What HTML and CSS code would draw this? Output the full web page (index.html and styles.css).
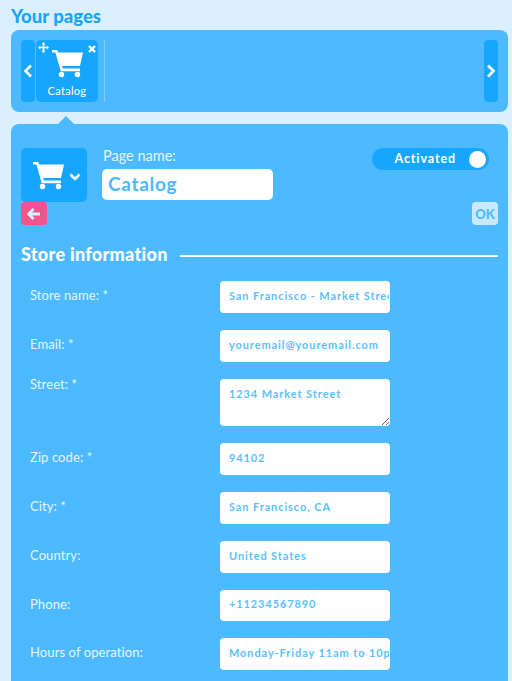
FILE: index.html
```html
<!DOCTYPE html>
<html lang="en">
<head>
<meta charset="UTF-8">
<meta name="viewport" content="width=device-width, initial-scale=1.0">
<title>Your pages</title>
<link rel="stylesheet" href="styles.css">
</head>
<body>

<svg class="defs" width="0" height="0">
    <symbol id="cart" viewBox="0 0 32 32">
        <path d="M1 3h5.200l1 2.400H32l-3 13.600H11.200l.7 2.400H29v2.800H9.800L4.400 5.600H1z"/>
        <circle cx="10.500" cy="27.500" r="2.700"/>
        <circle cx="26.500" cy="27.500" r="2.700"/>
    </symbol>
</svg>

<h2 class="title">Your pages</h2>

<div class="pages">
    <button class="nav">
        <svg width="10" height="14" viewBox="0 0 10 14"><path d="M8 1.500 2.500 7 8 12.500"/></svg>
    </button>
    <div class="tile">
        <svg class="tile-move" width="11" height="11" viewBox="0 0 11 11"><path d="M5.500 0 7.500 2.200H6.300V4.700H8.800V3.500L11 5.500 8.800 7.500V6.300H6.300V8.800H7.500L5.500 11 3.500 8.800H4.700V6.300H2.200V7.500L0 5.500 2.200 3.500V4.700H4.700V2.200H3.500z"/></svg>
        <svg class="tile-close" width="8" height="8" viewBox="0 0 8 8"><path d="M1 1l6 6M7 1 1 7"/></svg>
        <svg class="tile-cart" width="32" height="32"><use href="#cart"/></svg>
        <span class="tile-name">Catalog</span>
    </div>
    <div class="divider"></div>
    <button class="nav nav-right">
        <svg width="10" height="14" viewBox="0 0 10 14"><path d="M2 1.500 7.500 7 2 12.500"/></svg>
    </button>
</div>

<div class="editor">
    <div class="head">
        <div class="head-left">
            <div class="icon-pick">
                <svg width="32" height="32"><use href="#cart"/></svg>
                <svg class="chev" width="12" height="8" viewBox="0 0 12 8"><path d="M1.500 1.500 6 6l4.500-4.500"/></svg>
            </div>
            <button class="back">
                <svg width="14" height="12" viewBox="0 0 14 12"><path d="M6.500 1 1.700 6l4.800 5M2 6h11"/></svg>
            </button>
        </div>
        <div class="name-box">
            <label class="name-label">Page name:</label>
            <input class="name-input" type="text" value="Catalog">
        </div>
        <div class="head-right">
            <div class="toggle">
                <span>Activated</span>
                <i class="knob"></i>
            </div>
            <button class="ok">OK</button>
        </div>
    </div>

    <div class="section">
        <h3>Store information</h3>
        <div class="section-line"></div>
    </div>

    <div class="form">
        <div class="row">
            <label>Store name: *</label>
            <input type="text" value="San Francisco - Market Street">
        </div>
        <div class="row">
            <label>Email: *</label>
            <input type="text" value="youremail@youremail.com">
        </div>
        <div class="row row-tall">
            <label>Street: *</label>
            <textarea>1234 Market Street</textarea>
        </div>
        <div class="row">
            <label>Zip code: *</label>
            <input type="text" value="94102">
        </div>
        <div class="row">
            <label>City: *</label>
            <input type="text" value="San Francisco, CA">
        </div>
        <div class="row">
            <label>Country:</label>
            <input type="text" value="United States">
        </div>
        <div class="row">
            <label>Phone:</label>
            <input type="text" value="+11234567890">
        </div>
        <div class="row">
            <label>Hours of operation:</label>
            <input type="text" value="Monday-Friday 11am to 10pm">
        </div>
    </div>
</div>

</body>
</html>
```

FILE: styles.css
```css
html, body {
    height: 681px;
    overflow: hidden;
}

body {
    font-family: Lato, "Open Sans", sans-serif;
    background-color: #dbf0ff;
    margin: 0;
    padding: 6px 4px 0 11px;
    box-sizing: border-box;
    color: #fff;
}

.defs {
    display: block;
    height: 0;
}

button {
    border: 0;
    padding: 0;
    cursor: pointer;
    font-family: inherit;
}

svg {
    fill: #fff;
}

.title {
    margin: 0;
    height: 24px;
    font-size: 18.500px;
    line-height: 20px;
    font-weight: 900;
    color: #17a6ff;
}

.pages {
    display: flex;
    height: 62px;
    padding: 10px;
    background-color: #4dbaff;
    border-radius: 8px;
    position: relative;
}

/* little arrow under the selected page */
.pages::after {
    content: "";
    position: absolute;
    left: 47px;
    bottom: -12px;
    border-left: 8px solid transparent;
    border-right: 8px solid transparent;
    border-bottom: 8px solid #4dbaff;
}

.nav {
    width: 14px;
    height: 62px;
    background-color: #17a6ff;
    border-radius: 4px;
    display: flex;
    align-items: center;
    justify-content: center;
}

.nav svg path, .chev path {
    fill: none;
    stroke: #fff;
    stroke-width: 2.600;
}

.nav-right {
    margin-left: auto;
}

.tile {
    width: 62px;
    height: 62px;
    margin-left: 1px;
    background-color: #17a6ff;
    border-radius: 5px;
    position: relative;
    display: flex;
    flex-direction: column;
    align-items: center;
}

.tile-move {
    position: absolute;
    left: 2px;
    top: 2px;
}

.tile-close {
    position: absolute;
    right: 2px;
    top: 5px;
}

.tile-close path {
    fill: none;
    stroke: #fff;
    stroke-width: 2.400;
}

.tile-cart {
    margin-top: 7px;
}

.tile-name {
    margin-top: 5px;
    font-size: 11px;
    line-height: 14px;
    letter-spacing: 0.300px;
}

.divider {
    width: 1px;
    height: 62px;
    margin-left: 6px;
    background-color: #80ceff;
}

.editor {
    margin-top: 12px;
    padding: 24px 10px 40px;
    background-color: #4dbaff;
    border-radius: 8px 8px 0 0;
}

.head {
    display: flex;
    height: 77px;
}

.head-left {
    width: 81px;
}

.icon-pick {
    width: 66px;
    height: 54px;
    background-color: #17a6ff;
    border-radius: 5px;
    display: flex;
    align-items: center;
    padding-left: 11px;
    box-sizing: border-box;
}

.chev {
    margin-left: 5px;
    margin-top: 3px;
}

.back {
    width: 26px;
    height: 23px;
    background-color: #f4538c;
    border-radius: 4px;
    display: flex;
    align-items: center;
    justify-content: center;
}

.back path {
    fill: none;
    stroke: #dbf0ff;
    stroke-width: 2.800;
}

.name-box {
    width: 171px;
}

.name-label {
    display: block;
    height: 21px;
    padding-left: 1px;
    font-size: 14.500px;
    line-height: 16px;
    color: #e4f5ff;
}

.name-input {
    width: 100%;
    height: 31px;
    padding: 0 6px 3px;
    box-sizing: border-box;
    border: 0;
    border-radius: 5px;
    background-color: #fff;
    font-family: inherit;
    font-size: 19px;
    font-weight: 700;
    letter-spacing: 0.700px;
    color: #4dbaff;
    outline: none;
}

.head-right {
    flex: 1;
    display: flex;
    flex-direction: column;
    align-items: flex-end;
    justify-content: space-between;
}

.toggle {
    width: 117px;
    height: 22px;
    margin-right: 9px;
    padding-right: 3px;
    box-sizing: border-box;
    background-color: #17a6ff;
    border-radius: 11px;
    display: flex;
    align-items: center;
    justify-content: flex-end;
    font-size: 12.500px;
    font-weight: 700;
    letter-spacing: 0.900px;
}

.toggle span {
    margin-top: -2px;
}

.knob {
    width: 17px;
    height: 17px;
    margin-left: 13px;
    background-color: #fff;
    border-radius: 50%;
}

.ok {
    width: 26px;
    height: 23px;
    background-color: #c8e9ff;
    border-radius: 4px;
    font-size: 13px;
    font-weight: 900;
    color: #4dbaff;
}

.section {
    display: flex;
    align-items: center;
    margin-top: 15px;
    height: 28px;
}

.section h3 {
    margin: -1px 0 0;
    font-size: 18px;
    font-weight: 900;
    letter-spacing: 0.300px;
}

.section-line {
    flex: 1;
    height: 2px;
    margin-left: 12px;
    margin-top: 4px;
    background-color: #fff;
}

.form {
    display: flex;
    flex-direction: column;
    gap: 17px;
    margin-top: 13.300px;
    padding-left: 9px;
}

.row {
    display: flex;
    align-items: flex-start;
}

.row label {
    width: 190px;
    padding-top: 6px;
    font-size: 13px;
    line-height: 16px;
    letter-spacing: 0.100px;
    color: #e4f5ff;
}

.row-tall label {
    padding-top: 0;
    margin-top: -3px;
}

.row input, .row textarea {
    width: 170px;
    height: 31.850px;
    padding: 0 1px 3px 9px;
    margin: 0;
    box-sizing: border-box;
    border: 0;
    border-radius: 4px;
    background-color: #fff;
    font-family: inherit;
    font-size: 11px;
    font-weight: 700;
    letter-spacing: 0.900px;
    color: #5cc0ff;
    outline: none;
}

.row textarea {
    display: block;
    height: 47px;
    padding-top: 8px;
    line-height: 14px;
}
```
